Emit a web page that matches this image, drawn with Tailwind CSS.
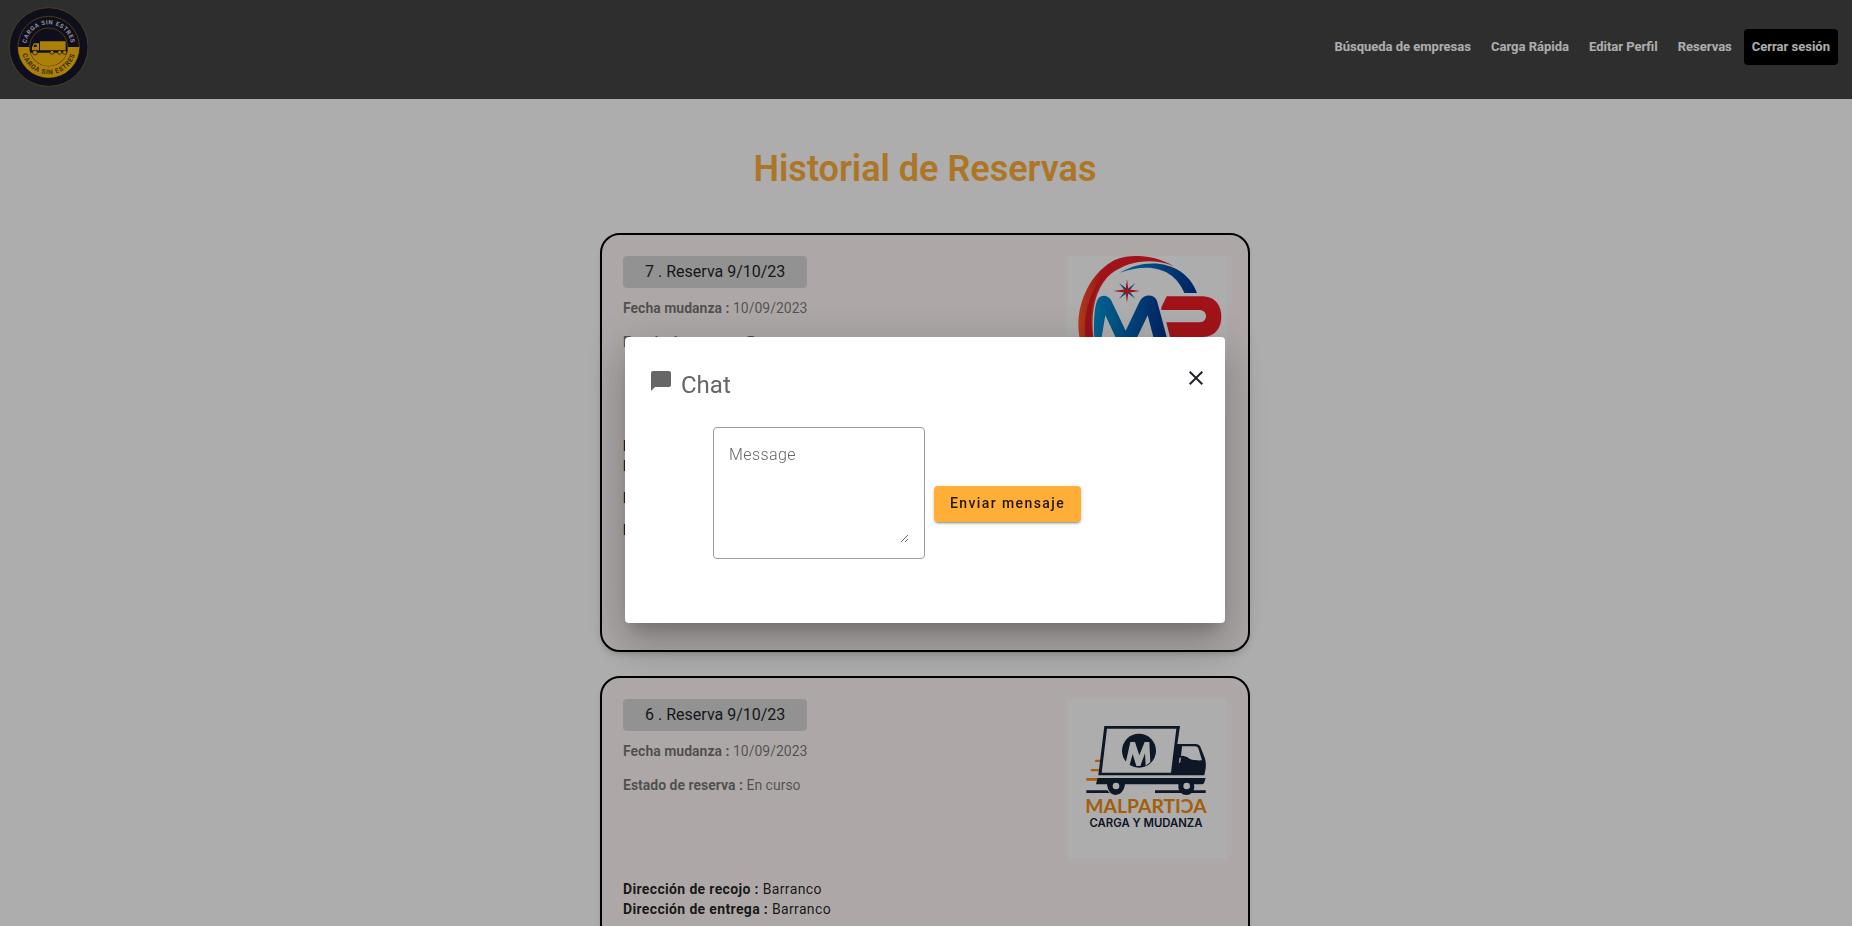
<!DOCTYPE html>
<html lang="es">
<head>
<meta charset="utf-8">
<meta name="viewport" content="width=device-width, initial-scale=1">
<title>Historial de Reservas</title>
<script src="https://cdn.jsdelivr.net/npm/@tailwindcss/browser@4"></script>
</head>
<body class="h-screen overflow-hidden bg-white font-[Roboto,sans-serif] text-[#212529]">

<header class="flex h-[99px] items-start justify-between bg-[#454545] pt-[7px] pr-3.5 pl-2">
  <a href="#" aria-label="Carga sin estrés">
    <svg class="size-20" viewBox="24 21 240 240" role="img" aria-hidden="true">
      <circle cx="146" cy="141" r="118" fill="#16162a" stroke="#8a6d18" stroke-width="2"/>
      <circle cx="146" cy="141" r="92" fill="#16162a" stroke="#a07c12" stroke-width="2"/>
      <path d="M54 141A92 92 0 0 0 238 141H204A58 58 0 0 1 88 141Z" fill="#fdbc0c"/>
      <circle cx="146" cy="141" r="57" fill="#16162a" stroke="#a07c12" stroke-width="2"/>
      <path d="M91 156A57 57 0 0 0 201 156Z" fill="#fdbc0c"/>
      <path d="M91 151H201V158H91Z" fill="#16162a"/>
      <path d="M120 124H197V151H120ZM96 151V141L102 130H117V151ZM103 134L100 141H110V134Z" fill="#fdbc0c" fill-rule="evenodd"/>
      <g fill="#fdbc0c" stroke="#16162a" stroke-width="2">
        <circle cx="105" cy="158" r="7"/><circle cx="156" cy="157" r="6"/><circle cx="179" cy="157" r="6"/><circle cx="194" cy="157" r="6"/>
      </g>
      <path id="sealTop" d="M78 141A68 68 0 0 1 214 141" fill="none"/>
      <path id="sealBottom" d="M64 141A82 82 0 0 0 228 141" fill="none"/>
      <text class="tracking-widest" font-size="18" font-weight="700" fill="#d5d5e2" text-anchor="middle"><textPath href="#sealTop" startOffset="50%">CARGA SIN ESTRES</textPath></text>
      <text class="tracking-widest" font-size="20" font-weight="700" fill="#54430f" text-anchor="middle"><textPath href="#sealBottom" startOffset="50%">CARGA SIN ESTRES</textPath></text>
    </svg>
  </a>
  <nav class="mt-[22px] flex items-center gap-1 text-[13px] font-bold text-white">
    <a href="#" class="px-2">Búsqueda de empresas</a>
    <a href="#" class="px-2">Carga Rápida</a>
    <a href="#" class="px-2">Editar Perfil</a>
    <a href="#" class="px-2">Reservas</a>
    <button type="button" class="h-9 rounded bg-black px-2">Cerrar sesión</button>
  </nav>
</header>

<main class="flex flex-col items-center pr-0.5">
  <h1 class="mt-[50px] text-4xl leading-10 font-semibold text-[#ffad38]">Historial de Reservas</h1>

  <div class="mt-11 flex w-full max-w-[650px] flex-col gap-6">
    <article class="h-[419px] rounded-[20px] border-2 border-black bg-[#fff8f7] p-[21px] shadow-md">
      <div class="flex justify-between">
        <div class="w-fit text-sm text-black/54">
          <h2 class="rounded bg-[#d8d8d8] text-center text-base leading-8 text-[#212529]">7 . Reserva 9/10/23</h2>
          <p class="mt-[9px] leading-[22px]"><strong>Fecha mudanza :</strong> 10/09/2023</p>
          <p class="mt-3 leading-[22px]"><strong>Estado de reserva :</strong> En curso</p>
        </div>
        <svg class="size-40 bg-white" viewBox="81 108 480 480" role="img" aria-label="MP">
          <defs>
            <linearGradient id="arcRed"><stop offset="0" stop-color="#ff5a26"/><stop offset=".25" stop-color="#ed1c24"/></linearGradient>
            <linearGradient id="mBlue"><stop offset="0" stop-color="#0093d6"/><stop offset=".5" stop-color="#0064b4"/><stop offset="1" stop-color="#00308f"/></linearGradient>
          </defs>
          <path d="M118 350C104 270 140 170 215 125C250 104 330 96 402 139C340 112 265 122 215 160C170 195 150 270 160 350L175 420H140Z" fill="url(#arcRed)"/>
          <path d="M136 350C128 270 160 180 226 138C180 165 142 240 158 350Z" fill="#e01a22"/>
          <path d="M240 158C330 105 440 130 471 219H433C405 152 340 124 240 158Z" fill="url(#mBlue)"/>
          <path d="M163 351C161 310 162 250 176 234C187 222 205 226 213 240L257 332L300 242C312 220 343 222 351 242L385 370H345L323 286L283 370H235L196 286L182 370H166Z" fill="url(#mBlue)"/>
          <path d="M364 262L380 229H490C528 231 544 258 544 290C544 325 524 349 490 351H390L379 307H480C504 305 504 272 480 270H364Z" fill="#ed1c24"/>
          <path d="M237 189L262 208L286 189L267 213L286 236L262 218L237 236L256 213Z" fill="#0064b4"/>
          <path d="M261 178L265 208L299 213L265 218L261 248L257 218L220 213L257 208Z" fill="#ed1c24"/>
        </svg>
      </div>
      <div class="mt-5 text-sm leading-5 tracking-wide text-black/87">
        <p><strong>Dirección de recojo :</strong> Barranco</p>
        <p><strong>Dirección de entrega :</strong> Barranco</p>
        <p class="mt-3"><strong>Precio :</strong></p>
        <p class="mt-3"><strong>Pago :</strong></p>
      </div>
    </article>

    <article class="h-[419px] rounded-[20px] border-2 border-black bg-[#fff8f7] p-[21px] shadow-md">
      <div class="flex justify-between">
        <div class="w-fit text-sm text-black/54">
          <h2 class="rounded bg-[#d8d8d8] text-center text-base leading-8 text-[#212529]">6 . Reserva 9/10/23</h2>
          <p class="mt-[9px] leading-[22px]"><strong>Fecha mudanza :</strong> 10/09/2023</p>
          <p class="mt-3 leading-[22px]"><strong>Estado de reserva :</strong> En curso</p>
        </div>
        <svg class="size-40 bg-white" viewBox="84 120 480 480" role="img" aria-label="Malpartida carga y mudanza">
          <g fill="#f08c10">
            <path d="M169 302H186V309H168ZM156 330H182V337H155ZM142 357H178V365H142Z"/>
          </g>
          <g fill="#142238">
            <path d="M196 201H423L415 255H470C477 255 481 258 484 263L496 293C501 304 501 318 500 328L496 349H178ZM204 209L188 341H396L412 209Z" fill-rule="evenodd"/>
            <path d="M176 357H500L495 373L490 376H465A26 26 0 0 1 418 376H258C256 393 247 407 229 408C214 407 206 393 204 376H171Z"/>
            <path d="M142 394H205L212 402H142ZM348 394H425L428 402H348ZM460 394H500V402H455Z"/>
            <circle cx="442" cy="384" r="24"/>
            <circle cx="300" cy="275" r="51"/>
          </g>
          <path d="M429 262H468C473 262 476 264 478 268L489 304C470 305 452 303 446 295L432 290L426 291ZM421 298L426 295L424 310L420 313Z" fill="#fff"/>
          <circle cx="231" cy="381" r="10" fill="#fff"/><circle cx="443" cy="381" r="10" fill="#fff"/>
          <path d="M259 316L274 249H288L301 289L317 249H331L334 310L320 320L318 283L304 321H292L281 285L272 318Z" fill="#fff"/>
          <text x="321" y="462" text-anchor="middle" font-family="Lato" font-size="58" font-weight="700" fill="#f08c10">MALPARTIƆA</text>
          <text x="321" y="504" text-anchor="middle" font-family="Inter" font-size="34" font-weight="600" fill="#142238">CARGA Y MUDANZA</text>
        </svg>
      </div>
      <div class="mt-5 text-sm leading-5 tracking-wide text-black/87">
        <p><strong>Dirección de recojo :</strong> Barranco</p>
        <p><strong>Dirección de entrega :</strong> Barranco</p>
      </div>
    </article>
  </div>
</main>

<div class="fixed inset-0 flex items-center justify-center bg-black/32 pt-[34px] pr-0.5">
  <section role="dialog" aria-modal="true" aria-labelledby="chatTitle" class="w-full max-w-[600px] rounded bg-white px-6 pt-7 pb-[42px] shadow-[0_11px_15px_-7px_rgba(0,0,0,0.2),0_24px_38px_3px_rgba(0,0,0,0.14),0_9px_46px_8px_rgba(0,0,0,0.12)]">
    <div class="flex items-start justify-between">
      <div class="flex gap-2 pt-1 text-[#666]">
        <svg class="size-6" viewBox="0 0 24 24" fill="currentColor" aria-hidden="true"><path d="M20 2H4c-1.1 0-2 .9-2 2v18l4-4h14c1.1 0 2-.9 2-2V4c0-1.1-.9-2-2-2z"/></svg>
        <h2 id="chatTitle" class="text-2xl leading-8">Chat</h2>
      </div>
      <button type="button" aria-label="Cerrar" class="-mr-2 flex size-[26px] items-center justify-center">
        <svg class="size-6" viewBox="0 0 24 24" fill="currentColor" aria-hidden="true"><path d="M19 6.41L17.59 5 12 10.59 6.41 5 5 6.41 10.59 12 5 17.59 6.41 19 12 13.41 17.59 19 19 17.59 13.41 12z"/></svg>
      </button>
    </div>
    <form class="mt-[26px] flex items-center gap-[9px] pl-16">
      <div class="mb-[22px] flex rounded border border-[#9c9c9c] p-[15px]">
        <textarea aria-label="Message" placeholder="Message" class="h-[100px] w-[180px] resize text-base leading-6 font-light tracking-wide outline-none placeholder:text-[#666]"></textarea>
      </div>
      <button type="button" class="h-9 rounded bg-[#ffae37] px-4 pb-0.5 text-sm font-medium tracking-widest text-black/87 shadow-[0_3px_1px_-2px_rgba(0,0,0,0.2),0_2px_2px_0_rgba(0,0,0,0.14),0_1px_5px_0_rgba(0,0,0,0.12)]">Enviar mensaje</button>
    </form>
  </section>
</div>
</body>
</html>
